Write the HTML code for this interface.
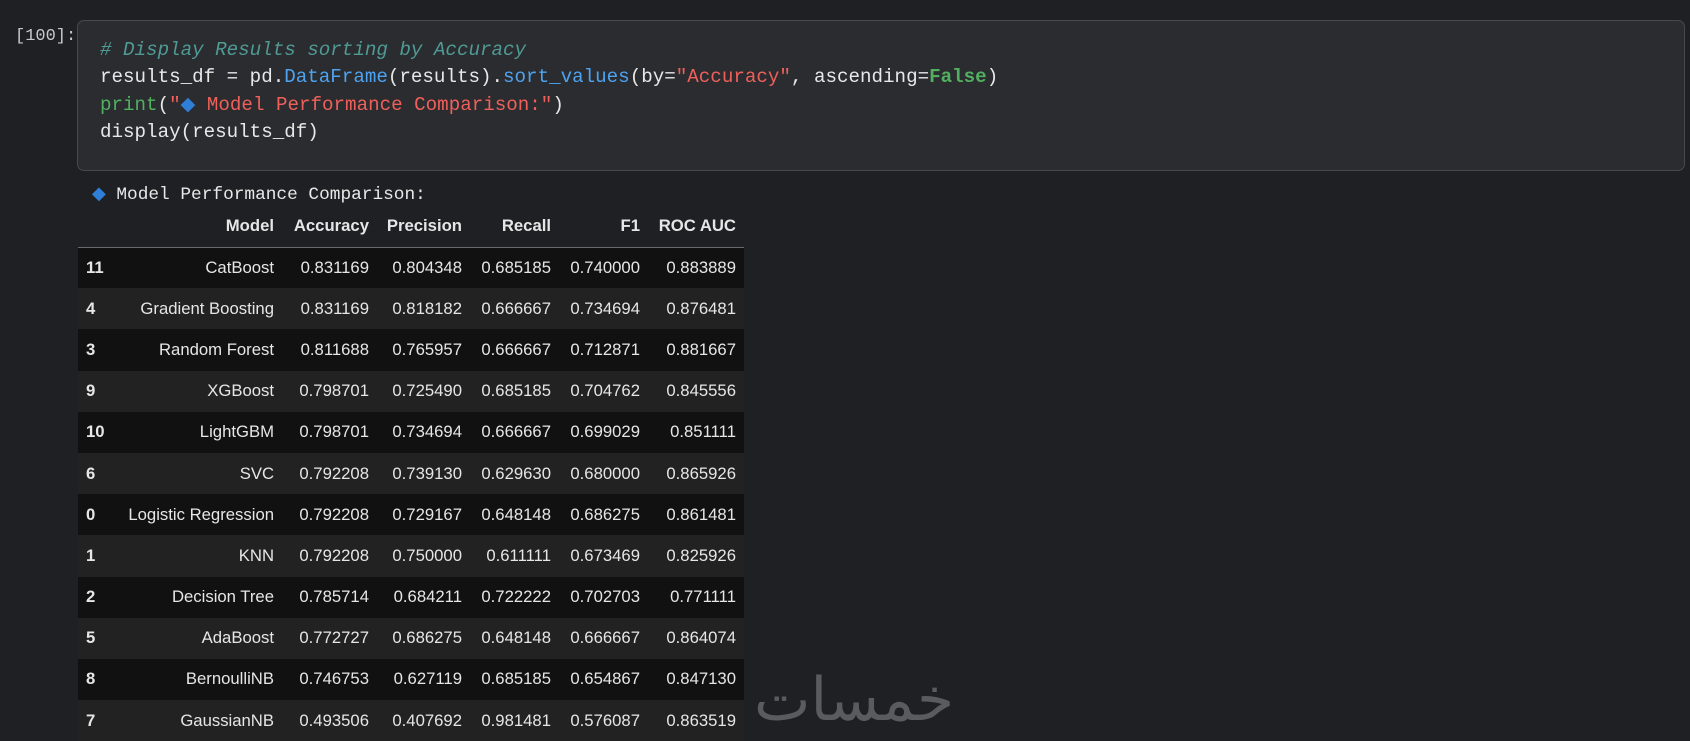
<!DOCTYPE html>
<html><head><meta charset="utf-8"><style>
body{margin:0;width:1690px;height:738px;background:#1f2023;overflow:hidden;position:relative;font-family:"Liberation Sans",sans-serif;}
.prompt{position:absolute;left:15px;top:27px;font:17px "Liberation Mono",monospace;color:#c8c8c8;}
.cell{position:absolute;left:77px;top:20px;width:1608px;height:151px;background:#2b2c30;border:1px solid #48494d;border-radius:7px;box-sizing:border-box;}
.code{position:absolute;left:100px;top:37px;font:19.2px/27.3px "Liberation Mono",monospace;color:#e8e8e8;white-space:pre;}
.c{color:#4f9a94;font-style:italic}.b{color:#4ea3f0}.g{color:#50b060}.s{color:#f0605a}.k{color:#50b060;font-weight:bold}
.d{color:#2f7fd8}
.out{position:absolute;left:92px;top:183px;font:17.8px "Liberation Mono",monospace;color:#e8e8e8;white-space:pre;}
table{position:absolute;left:78px;top:206px;border-collapse:collapse;table-layout:fixed;width:666px;font-size:16.7px;color:#e6e6e6;}
th,td{box-sizing:border-box;padding:0 8px 0 0;text-align:right;}
th{font-weight:bold;height:41px;border-bottom:1px solid #6a6a6a;}
td{height:41.2px;}
td:first-child{text-align:left;font-weight:bold;padding-left:8px;}
tbody tr:nth-child(odd) td{background:#111111}
tbody tr:nth-child(even) td{background:#222222}
.wm{position:absolute;left:754px;top:660px;font:60px "Noto Sans CJK SC","DejaVu Sans",sans-serif;line-height:70px;color:#5a5b5e;direction:rtl;}
</style></head><body>
<div class="prompt">[100]:</div>
<div class="cell"></div>
<div class="code"><span class="c"># Display Results sorting by Accuracy</span>
results_df = pd.<span class="b">DataFrame</span>(results).<span class="b">sort_values</span>(by=<span class="s">"Accuracy"</span>, ascending=<span class="k">False</span>)
<span class="g">print</span>(<span class="s">"<span class="d">◆</span> Model Performance Comparison:"</span>)
display(results_df)</div>
<div class="out"><span class="d">◆</span> Model Performance Comparison:</div>
<table>
<thead><tr><th style="width:40px"></th><th style="width:164px">Model</th><th style="width:95px">Accuracy</th><th style="width:93px">Precision</th><th style="width:89px">Recall</th><th style="width:89px">F1</th><th style="width:96px">ROC AUC</th></tr></thead>
<tbody>
<tr><td>11</td><td>CatBoost</td><td>0.831169</td><td>0.804348</td><td>0.685185</td><td>0.740000</td><td>0.883889</td></tr>
<tr><td>4</td><td>Gradient Boosting</td><td>0.831169</td><td>0.818182</td><td>0.666667</td><td>0.734694</td><td>0.876481</td></tr>
<tr><td>3</td><td>Random Forest</td><td>0.811688</td><td>0.765957</td><td>0.666667</td><td>0.712871</td><td>0.881667</td></tr>
<tr><td>9</td><td>XGBoost</td><td>0.798701</td><td>0.725490</td><td>0.685185</td><td>0.704762</td><td>0.845556</td></tr>
<tr><td>10</td><td>LightGBM</td><td>0.798701</td><td>0.734694</td><td>0.666667</td><td>0.699029</td><td>0.851111</td></tr>
<tr><td>6</td><td>SVC</td><td>0.792208</td><td>0.739130</td><td>0.629630</td><td>0.680000</td><td>0.865926</td></tr>
<tr><td>0</td><td>Logistic Regression</td><td>0.792208</td><td>0.729167</td><td>0.648148</td><td>0.686275</td><td>0.861481</td></tr>
<tr><td>1</td><td>KNN</td><td>0.792208</td><td>0.750000</td><td>0.611111</td><td>0.673469</td><td>0.825926</td></tr>
<tr><td>2</td><td>Decision Tree</td><td>0.785714</td><td>0.684211</td><td>0.722222</td><td>0.702703</td><td>0.771111</td></tr>
<tr><td>5</td><td>AdaBoost</td><td>0.772727</td><td>0.686275</td><td>0.648148</td><td>0.666667</td><td>0.864074</td></tr>
<tr><td>8</td><td>BernoulliNB</td><td>0.746753</td><td>0.627119</td><td>0.685185</td><td>0.654867</td><td>0.847130</td></tr>
<tr><td>7</td><td>GaussianNB</td><td>0.493506</td><td>0.407692</td><td>0.981481</td><td>0.576087</td><td>0.863519</td></tr>
</tbody></table>
<div class="wm">خمسات</div>
</body></html>
